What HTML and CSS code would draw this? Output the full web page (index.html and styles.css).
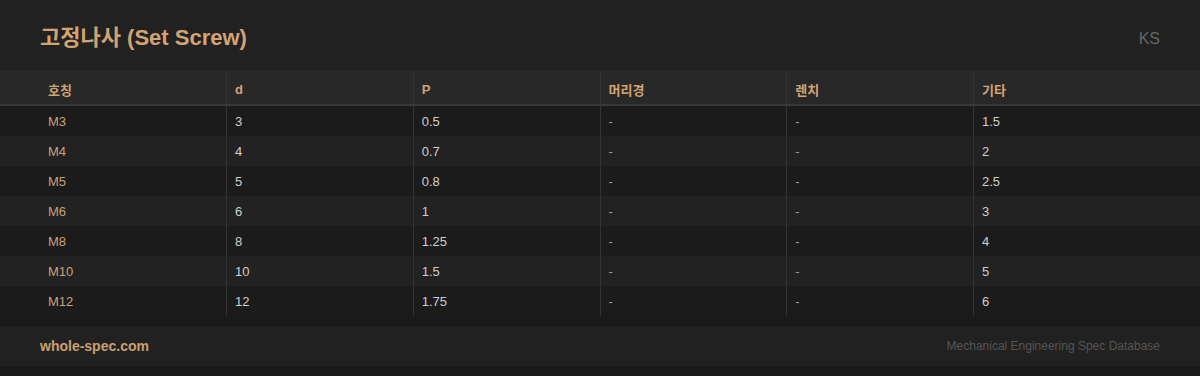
FILE: index.html
```html
<!DOCTYPE html>
<html lang="ko">
<head>
<meta charset="utf-8">
<link rel="stylesheet" href="styles.css">
</head>
<body>
<div class="page">
  <header class="top">
    <h1 class="title">고정나사 (Set Screw)</h1>
    <span class="std">KS</span>
  </header>
  <table class="spec">
    <thead>
      <tr><th>호칭</th><th>d</th><th>P</th><th>머리경</th><th>렌치</th><th>기타</th></tr>
    </thead>
    <tbody>
      <tr><td class="name">M3</td><td>3</td><td>0.5</td><td class="dash">-</td><td class="dash">-</td><td>1.5</td></tr>
      <tr><td class="name">M4</td><td>4</td><td>0.7</td><td class="dash">-</td><td class="dash">-</td><td>2</td></tr>
      <tr><td class="name">M5</td><td>5</td><td>0.8</td><td class="dash">-</td><td class="dash">-</td><td>2.5</td></tr>
      <tr><td class="name">M6</td><td>6</td><td>1</td><td class="dash">-</td><td class="dash">-</td><td>3</td></tr>
      <tr><td class="name">M8</td><td>8</td><td>1.25</td><td class="dash">-</td><td class="dash">-</td><td>4</td></tr>
      <tr><td class="name">M10</td><td>10</td><td>1.5</td><td class="dash">-</td><td class="dash">-</td><td>5</td></tr>
      <tr><td class="name">M12</td><td>12</td><td>1.75</td><td class="dash">-</td><td class="dash">-</td><td>6</td></tr>
    </tbody>
  </table>
  <footer class="foot">
    <span class="site">whole-spec.com</span>
    <span class="tag">Mechanical Engineering Spec Database</span>
  </footer>
</div>
</body>
</html>
```
FILE: styles.css
```css
html, body {
  margin: 0;
  padding: 0;
  background: #1a1a1a;
}
body {
  font-family: "Liberation Sans", Arial, "Noto Sans CJK KR", sans-serif;
  width: 1200px;
  height: 376px;
  overflow: hidden;
}
.page {
  display: flex;
  flex-direction: column;
}
.top {
  height: 70px;
  background: #212121;
  display: flex;
  align-items: center;
  justify-content: space-between;
  padding: 0 40px;
}
.title {
  margin: 0;
  font-size: 22px;
  font-weight: 700;
  color: #d4a373;
}
.std {
  font-size: 16px;
  color: #666;
  padding-top: 7px;
}
.spec {
  width: 100%;
  border-collapse: collapse;
  table-layout: fixed;
  font-size: 13px;
}
.spec th, .spec td {
  text-align: left;
  padding: 0 8px;
  border-left: 1px solid #333;
}
.spec th:first-child, .spec td:first-child {
  border-left: none;
  padding-left: 48px;
}
.spec th:last-child, .spec td:last-child {
  padding-right: 48px;
}
.spec th:first-child, .spec th:last-child { width: 170px; }
.spec th {
  height: 30px;
  padding-top: 4px;
  background: #282828;
  color: #d4a373;
  font-weight: 700;
  border-bottom: 2px solid #383838;
}
.spec td {
  height: 30px;
  color: #cfcfcf;
}
.spec tbody tr:nth-child(odd) { background: #1b1b1b; }
.spec tbody tr:nth-child(even) { background: #222222; }
.spec td.name { color: #c9a27a; }
.spec td.dash { color: #999; }
.foot {
  margin-top: 10px;
  height: 40px;
  background: #212121;
  display: flex;
  align-items: center;
  justify-content: space-between;
  padding: 0 40px;
}
.site {
  font-size: 14px;
  font-weight: 700;
  color: #c9a070;
}
.tag {
  font-size: 12px;
  color: #555;
}
```
